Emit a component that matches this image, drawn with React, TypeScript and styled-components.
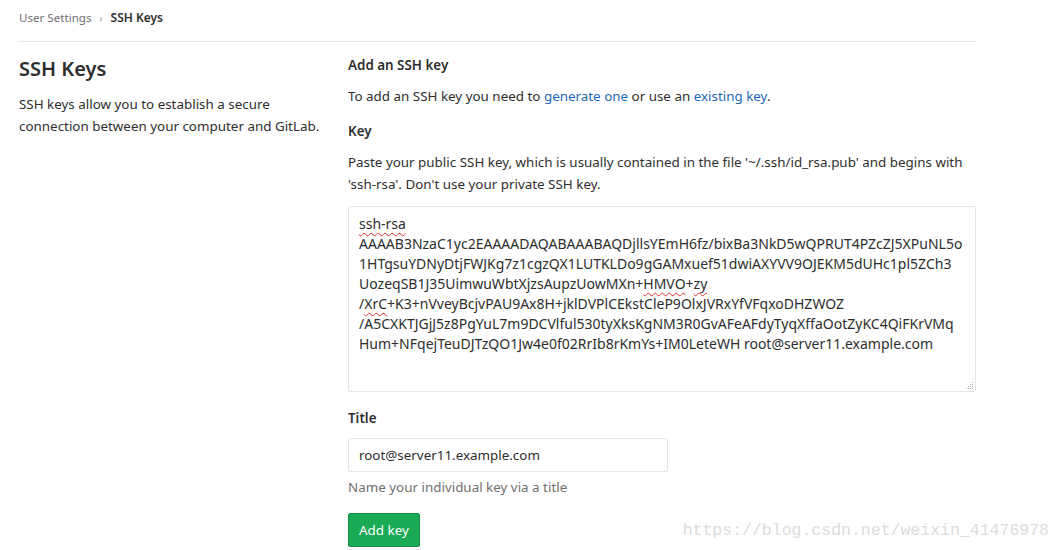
import React from 'react'
import styled, { createGlobalStyle } from 'styled-components'

const GlobalStyle = createGlobalStyle`
  body {
    margin: 0;
    background: #fff;
    font-family: 'Noto Sans', 'DejaVu Sans', sans-serif;
    color: #2e2e2e;
    font-size: 13.4px;
  }
`

const Page = styled.div`
  width: 957px;
  padding: 0 0 0 19px;
`

const Breadcrumbs = styled.div`
  display: flex;
  align-items: center;
  gap: 8px;
  height: 42px;
  border-bottom: 1px solid #e5e5e5;
  box-sizing: border-box;
  padding-bottom: 6px;
`

const Crumb = styled.span<{ $current?: boolean }>`
  color: ${(p) => (p.$current ? '#2e2e2e' : '#707070')};
  font-weight: ${(p) => (p.$current ? 600 : 400)};
  font-size: ${(p) => (p.$current ? '12px' : '11.6px')};
`

const Chevron = styled.span`
  color: #999;
  font-size: 10px;
`

const Layout = styled.div`
  display: grid;
  grid-template-columns: 329px 1fr;
`

const Side = styled.div`
  padding-top: 13px;
`

const SideTitle = styled.h4`
  margin: 0 0 10px;
  font-size: 20px;
  font-weight: 600;
  line-height: 28px;
`

const SideText = styled.p`
  margin: 0;
  line-height: 22px;
  width: 312px;
`

const Main = styled.div`
  padding-top: 13px;
`

const Heading = styled.h5`
  margin: 0 0 10px;
  font-size: 13.4px;
  font-weight: 600;
  line-height: 20px;
`

const Para = styled.p<{ $tight?: boolean }>`
  margin: 0 0 ${(p) => (p.$tight ? '11px' : '14px')};
  line-height: 22px;
`

const Link = styled.a`
  color: #1b69b6;
  text-decoration: none;
`

const Label = styled.label`
  display: block;
  margin: 0 0 10px;
  font-weight: 600;
  line-height: 20px;
`

const KeyBox = styled.div`
  position: relative;
  height: 186px;
  box-sizing: border-box;
  border: 1px solid #e5e5e5;
  border-radius: 2px;
  padding: 7px 10px 6px;
  font-size: 14px;
  line-height: 20px;
  white-space: pre;
  margin-bottom: 16px;
`

const Misspelled = styled.span`
  text-decoration: underline wavy #e03030;
  text-decoration-thickness: 1px;
  text-underline-offset: 3px;
`

const Grip = styled.svg`
  position: absolute;
  right: 1px;
  bottom: 1px;
`

const TextInput = styled.input`
  display: block;
  width: 320px;
  height: 34px;
  box-sizing: border-box;
  border: 1px solid #e5e5e5;
  border-radius: 2px;
  padding: 6px 10px;
  font: inherit;
  color: #2e2e2e;
`

const Help = styled.p`
  margin: 5px 0 16px;
  color: #707070;
  line-height: 20px;
`

const Button = styled.button`
  height: 34px;
  padding: 0 10px;
  border: 1px solid #168f48;
  border-radius: 2px;
  background: #1aaa55;
  color: #fff;
  font: inherit;
`

const Watermark = styled.div`
  position: absolute;
  right: 12px;
  bottom: 10px;
  font-family: 'Liberation Mono', monospace;
  font-size: 16.5px;
  color: #dcdcdc;
`

export default function App() {
  return (
    <>
      <GlobalStyle />
      <Page>
        <Breadcrumbs>
          <Crumb>User Settings</Crumb>
          <Chevron>›</Chevron>
          <Crumb $current>SSH Keys</Crumb>
        </Breadcrumbs>
        <Layout>
          <Side>
            <SideTitle>SSH Keys</SideTitle>
            <SideText>
              SSH keys allow you to establish a secure connection between your computer and GitLab.
            </SideText>
          </Side>
          <Main>
            <Heading>Add an SSH key</Heading>
            <Para>
              To add an SSH key you need to <Link href="#">generate one</Link> or use an{' '}
              <Link href="#">existing key</Link>.
            </Para>
            <Label>Key</Label>
            <Para $tight>
              Paste your public SSH key, which is usually contained in the file '~/.ssh/id_rsa.pub' and begins with
              'ssh-rsa'. Don't use your private SSH key.
            </Para>
            <KeyBox>
              <Misspelled>ssh-rsa</Misspelled>
              {'\nAAAAB3NzaC1yc2EAAAADAQABAAABAQDjllsYEmH6fz/bixBa3NkD5wQPRUT4PZcZJ5XPuNL5o\n'}
              {'1HTgsuYDNyDtjFWJKg7z1cgzQX1LUTKLDo9gGAMxuef51dwiAXYVV9OJEKM5dUHc1pl5ZCh3\n'}
              {'UozeqSB1J35UimwuWbtXjzsAupzUowMXn+'}
              <Misspelled>HMVO</Misspelled>+<Misspelled>zy</Misspelled>
              {'\n/'}
              <Misspelled>XrC</Misspelled>
              {'+K3+nVveyBcjvPAU9Ax8H+jklDVPlCEkstCleP9OlxJVRxYfVFqxoDHZWOZ\n'}
              {'/A5CXKTJGjJ5z8PgYuL7m9DCVlful530tyXksKgNM3R0GvAFeAFdyTyqXffaOotZyKC4QiFKrVMq\n'}
              {'Hum+NFqejTeuDJTzQO1Jw4e0f02RrIb8rKmYs+IM0LeteWH root@server11.example.com'}
              <Grip width="9" height="9" viewBox="0 0 9 9">
                <g fill="#b0b0b0">
                  <rect x="7" y="1" width="1" height="1" />
                  <rect x="5" y="3" width="1" height="1" />
                  <rect x="7" y="3" width="1" height="1" />
                  <rect x="3" y="5" width="1" height="1" />
                  <rect x="5" y="5" width="1" height="1" />
                  <rect x="7" y="5" width="1" height="1" />
                  <rect x="1" y="7" width="1" height="1" />
                  <rect x="3" y="7" width="1" height="1" />
                  <rect x="5" y="7" width="1" height="1" />
                  <rect x="7" y="7" width="1" height="1" />
                </g>
              </Grip>
            </KeyBox>
            <Label>Title</Label>
            <TextInput defaultValue="root@server11.example.com" />
            <Help>Name your individual key via a title</Help>
            <Button>Add key</Button>
          </Main>
        </Layout>
      </Page>
      <Watermark>https://blog.csdn.net/weixin_41476978</Watermark>
    </>
  )
}
